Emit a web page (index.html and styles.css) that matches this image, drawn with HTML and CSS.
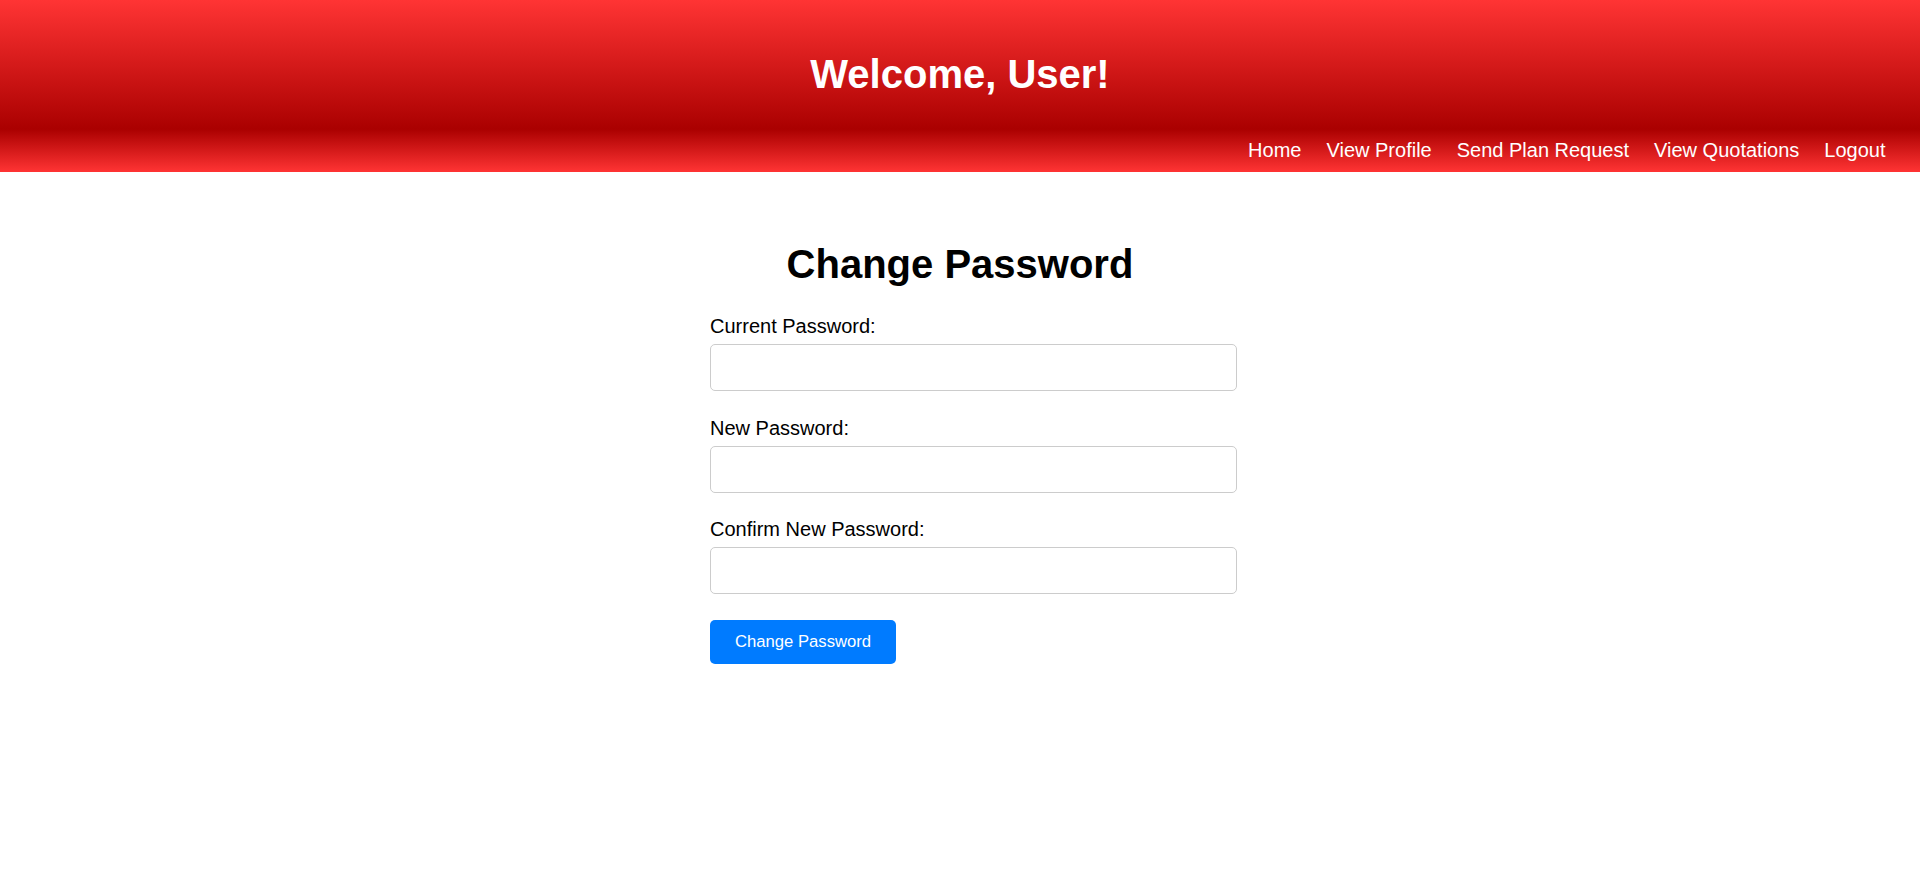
FILE: index.html
```html
<!DOCTYPE html>
<html lang="en">
<head>
<meta charset="utf-8">
<title>Change Password</title>
<link rel="stylesheet" href="styles.css">
</head>
<body>
<header class="site-header">
  <div class="header-top">
    <h1 class="welcome">Welcome, User!</h1>
  </div>
  <nav class="main-nav">
    <a href="#" class="nav-link">Home</a>
    <a href="#" class="nav-link">View Profile</a>
    <a href="#" class="nav-link">Send Plan Request</a>
    <a href="#" class="nav-link">View Quotations</a>
    <a href="#" class="nav-link">Logout</a>
  </nav>
</header>
<main class="content">
  <h2 class="page-title">Change Password</h2>
  <form class="pw-form">
    <div class="form-group">
      <label class="field-label" for="cur">Current Password:</label>
      <input class="field-input" type="password" id="cur">
    </div>
    <div class="form-group">
      <label class="field-label" for="new">New Password:</label>
      <input class="field-input" type="password" id="new">
    </div>
    <div class="form-group">
      <label class="field-label" for="conf">Confirm New Password:</label>
      <input class="field-input" type="password" id="conf">
    </div>
    <button type="button" class="submit-btn">Change Password</button>
  </form>
</main>
</body>
</html>
```
FILE: styles.css
```css
html, body {
  margin: 0;
  padding: 0;
  background: #ffffff;
  font-family: "Liberation Sans", Arial, sans-serif;
  color: #000;
}

.site-header {
  display: block;
}

.header-top {
  height: 129px;
  box-sizing: border-box;
  padding-top: 51px;
  background: linear-gradient(to bottom, #ff3434 0%, #aa0000 100%);
  text-align: center;
}

.welcome {
  margin: 0;
  font-size: 40px;
  line-height: 46px;
  font-weight: bold;
  color: #ffffff;
}

.main-nav {
  display: flex;
  justify-content: flex-end;
  gap: 25px;
  height: 43px;
  box-sizing: border-box;
  padding: 10px 34.5px 10px 0;
  background: linear-gradient(to bottom, #aa0000 0%, #ff3434 100%);
}

.nav-link {
  color: #ffffff;
  text-decoration: none;
  font-size: 20px;
  line-height: 23px;
}

.content {
  width: 500px;
  margin: 69px auto 0;
}

.page-title {
  margin: 0 0 28px;
  font-size: 40px;
  line-height: 46px;
  font-weight: bold;
  text-align: center;
}

.pw-form {
  display: block;
}

.form-group {
  margin-bottom: 25.5px;
}

.field-label {
  display: block;
  font-size: 20px;
  line-height: 23px;
  margin-bottom: 6px;
  color: #000;
}

.field-input {
  display: block;
  width: 527px;
  height: 47px;
  box-sizing: border-box;
  padding: 12px;
  border: 1px solid #cccccc;
  border-radius: 5px;
  font-size: 16.67px;
  font-family: "Liberation Sans", Arial, sans-serif;
  background: #fff;
}

.submit-btn {
  display: block;
  height: 44px;
  padding: 0 25px;
  border: none;
  border-radius: 5px;
  background: #007bff;
  color: #ffffff;
  font-family: "Liberation Sans", Arial, sans-serif;
  font-size: 16.67px;
  line-height: 19px;
  cursor: pointer;
}
```
